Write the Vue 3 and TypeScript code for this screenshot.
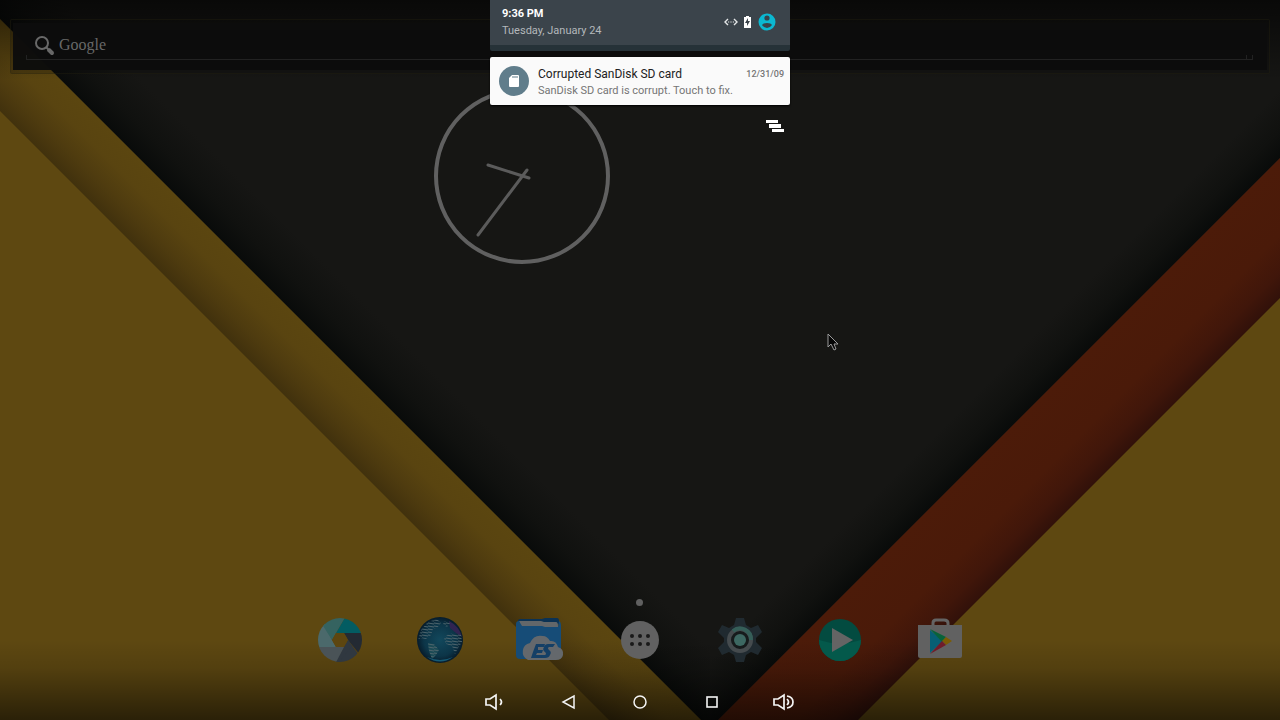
<script setup lang="ts">
interface App {
  id: string
  label: string
}

const apps: App[] = [
  { id: 'camera', label: 'Camera' },
  { id: 'browser', label: 'Browser' },
  { id: 'files', label: 'ES File Explorer' },
  { id: 'drawer', label: 'All apps' },
  { id: 'settings', label: 'Settings' },
  { id: 'player', label: 'Media player' },
  { id: 'store', label: 'Play Store' },
]

const navKeys: App[] = [
  { id: 'quieter', label: 'Volume down' },
  { id: 'back', label: 'Back' },
  { id: 'home', label: 'Home' },
  { id: 'recent', label: 'Recent apps' },
  { id: 'louder', label: 'Volume up' },
]
</script>

<template>
  <div class="screen">
    <svg class="wallpaper" viewBox="0 0 1280 720" preserveAspectRatio="none" aria-hidden="true">
      <defs>
        <linearGradient id="leftShade" gradientUnits="userSpaceOnUse" x1="300" y1="411" x2="346" y2="365">
          <stop offset="0" stop-color="#41310d" />
          <stop offset="0.3" stop-color="#4e3b0f" />
          <stop offset="0.65" stop-color="#594410" />
          <stop offset="1" stop-color="#5b4610" />
        </linearGradient>
        <linearGradient id="darkLeft" gradientUnits="userSpaceOnUse" x1="300" y1="319" x2="340" y2="279">
          <stop offset="0" stop-color="#090b0a" />
          <stop offset="0.4" stop-color="#10110f" />
          <stop offset="1" stop-color="#161614" />
        </linearGradient>
        <linearGradient id="darkRight" gradientUnits="userSpaceOnUse" x1="1000" y1="438" x2="966" y2="404">
          <stop offset="0" stop-color="#090b0a" />
          <stop offset="0.4" stop-color="#10110f" />
          <stop offset="1" stop-color="#161614" />
        </linearGradient>
        <linearGradient id="redShade" gradientUnits="userSpaceOnUse" x1="1000" y1="438" x2="1070" y2="508">
          <stop offset="0" stop-color="#4c1b09" />
          <stop offset="0.55" stop-color="#4a1a09" />
          <stop offset="0.82" stop-color="#40160a" />
          <stop offset="1" stop-color="#31110a" />
        </linearGradient>
        <linearGradient id="topFade" x1="0" y1="0" x2="0" y2="1">
          <stop offset="0" stop-color="#000" stop-opacity="0.6" />
          <stop offset="1" stop-color="#000" stop-opacity="0" />
        </linearGradient>
        <linearGradient id="bottomFade" x1="0" y1="0" x2="0" y2="1">
          <stop offset="0" stop-color="#000" stop-opacity="0" />
          <stop offset="0.35" stop-color="#000" stop-opacity="0.12" />
          <stop offset="1" stop-color="#000" stop-opacity="0.55" />
        </linearGradient>
      </defs>
      <rect width="1280" height="720" fill="#161614" />
      <path d="M0 19 701 720H710V648L0-62Z" fill="url(#darkLeft)" />
      <path d="M1280 158 718 720H710V648L1280 78Z" fill="url(#darkRight)" />
      <path d="M0 19 701 720H0Z" fill="url(#leftShade)" />
      <path d="M0 111 609 720H0Z" fill="#5e4811" />
      <path d="M1280 158V720H718Z" fill="url(#redShade)" />
      <path d="M1280 298V720H858Z" fill="#5e4811" />
      <rect width="1280" height="80" fill="url(#topFade)" />
      <rect y="640" width="1280" height="80" fill="url(#bottomFade)" />
    </svg>

    <main class="home">
      <form class="search" role="search" @submit.prevent>
        <div class="search-box">
          <button class="search-go" type="submit" aria-label="Search">
            <svg width="22" height="22" viewBox="0 0 22 22">
              <circle cx="8" cy="8" r="6" fill="none" stroke="#686868" stroke-width="2" />
              <path d="M12 12l2 2" stroke="#686868" stroke-width="2" />
              <path d="M15 15l3 3" stroke="#686868" stroke-width="4" stroke-linecap="round" />
            </svg>
          </button>
          <input class="search-input" type="text" placeholder="Google" aria-label="Search Google" />
          <span class="search-line"></span>
        </div>
      </form>

      <div class="widgets">
        <svg class="clock" width="180" height="180" viewBox="0 0 180 180" role="img" aria-label="Clock, 9:36">
          <circle cx="90" cy="90" r="86" fill="none" stroke="#606060" stroke-width="4" />
          <path d="M56 79l41 13" fill="none" stroke="#5b5b5b" stroke-width="3" stroke-linecap="round" />
          <path d="M95 84L46 149" fill="none" stroke="#5b5b5b" stroke-width="3" stroke-linecap="round" />
        </svg>
      </div>

      <span class="page-dot"></span>

      <nav class="dock" aria-label="Favourites">
        <button v-for="app in apps" :key="app.id" class="app" type="button" :aria-label="app.label">
          <svg v-if="app.id === 'camera'" width="48" height="48" viewBox="0 0 48 48">
            <defs><clipPath id="lens"><circle cx="24" cy="24" r="22" /></clipPath></defs>
            <g clip-path="url(#lens)">
              <path d="M20 17L31-2H52V17Z" fill="#035c62" />
              <path d="M28 17H52V34L45 40L32 24Z" fill="#232a33" />
              <path d="M32 24L47 45L18 50L28 31Z" fill="#303840" />
              <path d="M32 24L36 30L20 50L18 48L28 31Z" fill="#303840" />
              <path d="M28 31L16 54L0 48V31Z" fill="#4a5357" />
              <path d="M20 31H0V12L8 7L16 24Z" fill="#4b696b" />
              <path d="M20 17L16 24L4 5L18-2H31Z" fill="#356360" />
            </g>
            <path d="M20 17H28L32 24L28 31H20L16 24Z" fill="#5d4610" />
          </svg>

          <svg v-else-if="app.id === 'browser'" width="48" height="48" viewBox="0 0 48 48">
            <defs>
              <radialGradient id="ocean" cx="0.5" cy="0.5" r="0.5">
                <stop offset="0" stop-color="#12485c" />
                <stop offset="0.7" stop-color="#0c3548" />
                <stop offset="1" stop-color="#071b2a" />
              </radialGradient>
              <pattern id="scan" width="6" height="3" patternUnits="userSpaceOnUse">
                <path d="M0 1L6 2" stroke="#4d646c" />
              </pattern>
            </defs>
            <circle cx="24" cy="24" r="23" fill="url(#ocean)" />
            <path d="M33 5Q43 10 46 21L40 17L34 12Z" fill="#302451" />
            <path d="M5 14L12 6L21 3L25 7L21 12L17 13L15 19L10 23L4 22L2 25Z" fill="url(#scan)" />
            <path d="M12 27L18 28L23 34L20 39L16 43L13 35Z" fill="#1b4a55" />
            <path d="M12 27L18 28L23 34L20 39L16 43L13 35Z" fill="url(#scan)" />
            <path d="M28 5L34 7L31 11L27 9Z M31 19L37 17L45 19L46 26L42 32L39 38L36 30L30 28L28 23Z" fill="url(#scan)" />
            <path d="M11 41Q24 47 37 41Q24 50 11 41Z" fill="#155b76" />
          </svg>

          <svg v-else-if="app.id === 'files'" width="48" height="48" viewBox="0 0 48 48">
            <path d="M2 5Q2 3 4 3H26L29 2H41Q43 2 43 5V8H2Z" fill="#0b3254" />
            <path d="M3 5H25L28 6H40Q42 6 42 10V13H5Z" fill="#63676a" />
            <path d="M0 8Q0 5 3 5L6 10H26L29 11H42L43 5Q45 6 45 9V39Q45 43 41 43H4Q0 43 0 39Z" fill="#164c77" />
            <path d="M12 44A9 9 0 0 1 14 27Q18 18 27 20Q31 20 34 25Q40 24 42 31Q48 33 47 39Q46 44 40 44Z" fill="#64686c" />
            <path d="M20 28H29L28 31H22L22 34H27L26 37H21L20 39H26L25 42H15L17 36ZM32 28H39L37 31H33Q31 32 33 34Q36 36 34 39Q33 42 29 42H25L26 39H29Q31 38 29 36Q26 34 28 31Q29 28 32 28Z" fill="#143f66" />
          </svg>

          <svg v-else-if="app.id === 'drawer'" width="48" height="48" viewBox="0 0 48 48">
            <circle cx="24" cy="24" r="19" fill="#616161" />
            <g fill="#191919">
              <circle cx="16" cy="20" r="2" /><circle cx="24" cy="20" r="2" /><circle cx="32" cy="20" r="2" />
              <circle cx="16" cy="28" r="2" /><circle cx="24" cy="28" r="2" /><circle cx="32" cy="28" r="2" />
            </g>
          </svg>

          <svg v-else-if="app.id === 'settings'" width="48" height="48" viewBox="0 0 48 48">
            <path d="M20 2H28L30 9L35 12L42 9L46 16L40 22V26L46 32L42 39L35 36L30 39L28 46H20L18 39L13 36L6 39L2 32L8 26V22L2 16L6 9L13 12L18 9Z" fill="#202a30" />
            <circle cx="24" cy="24" r="11" fill="#161b1c" stroke="#454b4e" stroke-width="4" />
            <path d="M17 15A11 11 0 0 1 35 24" fill="none" stroke="#355e58" stroke-width="4" />
            <circle cx="24" cy="24" r="6" fill="#3d6862" />
          </svg>

          <svg v-else-if="app.id === 'player'" width="48" height="48" viewBox="0 0 48 48">
            <circle cx="24" cy="24" r="21" fill="#034b40" />
            <path d="M3 24Q24 31 45 24A21 21 0 0 1 3 24Z" fill="#04594b" />
            <path d="M16 12L37 24L16 36Z" fill="#646464" />
          </svg>

          <svg v-else width="48" height="48" viewBox="0 0 48 48">
            <path d="M17 9V7Q17 4 20 4H28Q32 4 32 7V9" fill="none" stroke="#646464" stroke-width="3" />
            <path d="M2 9H46V40Q46 42 44 42H4Q2 42 2 40Z" fill="#616161" />
            <path d="M14 14V37L27 25Z" fill="#075f74" />
            <path d="M14 13L30 21L26 26Z" fill="#08633a" />
            <path d="M30 21L36 25L30 29L26 25Z" fill="#7b5c05" />
            <path d="M14 38L30 29L26 25Z" fill="#701c2a" />
          </svg>
        </button>
      </nav>

      <nav class="keys" aria-label="System">
        <button v-for="key in navKeys" :key="key.id" class="key" type="button" :aria-label="key.label">
          <svg width="24" height="20" viewBox="0 0 24 20" fill="none" stroke="#f4f4f4" stroke-width="1.7">
            <template v-if="key.id === 'quieter'">
              <path d="M2 7H6L12 3V17L6 13H2Z" /><path d="M16 7Q19 10 16 13" />
            </template>
            <path v-else-if="key.id === 'back'" d="M18 4V16L7 10Z" stroke-width="1.5" />
            <circle v-else-if="key.id === 'home'" cx="12" cy="10" r="6" stroke-width="1.5" />
            <rect v-else-if="key.id === 'recent'" x="7" y="5" width="10" height="10" stroke-width="1.6" />
            <template v-else>
              <path d="M2 7H6L12 3V17L6 13H2Z" /><path d="M15 7Q18 10 15 13" /><path d="M15 4Q21 5 21 10T15 16" />
            </template>
          </svg>
        </button>
      </nav>
    </main>

    <aside class="shade" aria-label="Notifications">
      <header class="status">
        <div class="when">
          <time class="time">9:36 PM</time>
          <span class="date">Tuesday, January 24</span>
        </div>
        <div class="tray">
          <svg width="14" height="10" viewBox="0 0 14 10" fill="none" stroke="#e4e7e8" aria-hidden="true">
            <path d="M4 2L1 5L4 8M10 2L13 5L10 8" stroke-width="1.4" />
            <path d="M4 5H10" stroke-width="1.2" stroke-dasharray="1.2 1.2" />
          </svg>
          <svg class="battery" width="7" height="12" viewBox="0 0 7 12" aria-hidden="true">
            <path d="M2 0H5V1H7V12H0V1H2Z" fill="#fff" />
            <path d="M4 2L1 7H3V10L6 5H4Z" fill="#3b444b" />
          </svg>
          <button class="user" type="button" aria-label="User profile">
            <svg width="18" height="18" viewBox="0 0 18 18">
              <circle cx="9" cy="9" r="8.5" fill="#0bb8d1" />
              <circle cx="9" cy="5" r="2.6" fill="#37434b" />
              <path d="M4 12Q5 10 9 10T14 12Q12 15 9 15T4 12Z" fill="#37434b" />
            </svg>
          </button>
        </div>
      </header>

      <article class="note">
        <span class="note-icon">
          <svg width="10" height="12" viewBox="0 0 10 12" aria-hidden="true">
            <path d="M3 0H9Q10 0 10 1V11Q10 12 9 12H1Q0 12 0 11V3Z" fill="#fff" />
            <path d="M4 1V3M6 1V3M8 1V3" stroke="#607d8b" />
          </svg>
        </span>
        <div class="note-body">
          <div class="note-head">
            <h2 class="note-title">Corrupted SanDisk SD card</h2>
            <time class="note-date">12/31/09</time>
          </div>
          <p class="note-text">SanDisk SD card is corrupt. Touch to fix.</p>
        </div>
      </article>

      <button class="clear" type="button" aria-label="Clear all">
        <svg width="18" height="12" viewBox="0 0 18 12" fill="#fff">
          <path d="M0 0H12V3H0ZM3 4H15V8H3ZM6 9H18V12H6Z" />
        </svg>
      </button>
    </aside>

    <svg class="pointer" width="12" height="18" viewBox="0 0 12 18" aria-hidden="true">
      <path d="M1 1V14L4 11L7 17L9 16L7 11H11Z" fill="#050505" stroke="#9b9b9b" />
    </svg>
  </div>
</template>

<style>
body {
  margin: 0;
  background: #161614;
}
</style>

<style scoped>
.screen {
  position: relative;
  min-height: 100vh;
  display: flex;
  overflow: hidden;
  font-family: Roboto, "Liberation Sans", sans-serif;
}

button {
  padding: 0;
  border: 0;
  background: none;
  display: flex;
  align-items: center;
  justify-content: center;
  cursor: pointer;
}

svg {
  display: block;
}

.wallpaper {
  position: absolute;
  inset: 0;
  width: 100%;
  height: 100%;
}

.home {
  position: relative;
  flex: 1;
  display: flex;
  flex-direction: column;
}

.search {
  margin: 19px 10px 0;
  padding: 3px 2px;
  border: 1px solid rgba(40, 36, 18, 0.35);
  border-radius: 2px;
  background: rgba(10, 10, 8, 0.2);
}

.search-box {
  height: 47px;
  padding: 0 14px 10px 20px;
  box-sizing: border-box;
  display: grid;
  grid-template-columns: 24px 1fr;
  grid-template-rows: 32px 5px;
  background: rgba(12, 12, 12, 0.96);
}

.search-go {
  height: 32px;
  padding-top: 13px;
  box-sizing: border-box;
}

.search-input {
  min-width: 0;
  height: 32px;
  padding: 11px 0 0 2px;
  border: 0;
  box-sizing: border-box;
  background: none;
  outline: none;
  color: #686868;
  font: 16px "Liberation Serif", serif;
}

.search-input::placeholder {
  color: #686868;
  opacity: 1;
}

.search-line {
  grid-column: 1 / -1;
  margin-left: -7px;
  border: 1px solid #222;
  border-top: 0;
}

.search-line::after {
  content: "";
  display: block;
  height: 4px;
  margin-right: 5px;
  border-right: 1px solid #222;
}

.widgets {
  flex: 1;
  padding-top: 12px;
  padding-left: calc(50% - 208px);
}

.page-dot {
  align-self: center;
  width: 7px;
  height: 7px;
  margin: 0 1px 10px 0;
  border-radius: 50%;
  background: #606060;
}

.dock {
  display: flex;
  justify-content: center;
  gap: 52px;
}

.keys {
  height: 36px;
  padding-top: 20px;
  display: flex;
  justify-content: center;
  gap: 48px;
}

.shade {
  position: absolute;
  top: 0;
  left: 50%;
  width: 300px;
  margin-left: -150px;
  display: flex;
  flex-direction: column;
}

.status {
  height: 51px;
  padding: 5px 14px 0 12px;
  box-sizing: border-box;
  display: flex;
  border-bottom: 6px solid #263238;
  border-radius: 0 0 2px 2px;
  background: #3b444b;
}

.when {
  flex: 1;
  display: flex;
  flex-direction: column;
}

.tray {
  height: 34px;
  display: flex;
  align-items: center;
}

.time {
  color: #fff;
  font-size: 11px;
  font-weight: 700;
  line-height: 17px;
}

.date {
  color: #b4b8bb;
  font-size: 11px;
  line-height: 17px;
}

.battery {
  margin: 0 7px 0 6px;
}

.note {
  height: 48px;
  margin-top: 6px;
  padding: 0 6px 0 9px;
  box-sizing: border-box;
  display: flex;
  align-items: center;
  gap: 9px;
  border-radius: 2px;
  background: #fafafa;
  box-shadow: 0 1px 2px #000;
}

.note-icon {
  width: 30px;
  height: 30px;
  display: flex;
  align-items: center;
  justify-content: center;
  border-radius: 50%;
  background: #607d8b;
}

.note-body {
  flex: 1;
  padding-top: 2px;
}

.note-head {
  display: flex;
  align-items: center;
  justify-content: space-between;
}

.note-title {
  margin: 0;
  color: #212121;
  font-size: 12px;
  font-weight: 400;
  line-height: 16px;
}

.note-date {
  color: #757575;
  font-size: 9px;
  font-weight: 500;
  line-height: 16px;
}

.note-text {
  margin: 0;
  color: #757575;
  font-size: 11px;
  line-height: 17px;
}

.clear {
  align-self: flex-end;
  margin: 15px 6px 0 0;
}

.pointer {
  position: absolute;
  left: 827px;
  top: 333px;
  pointer-events: none;
}
</style>
